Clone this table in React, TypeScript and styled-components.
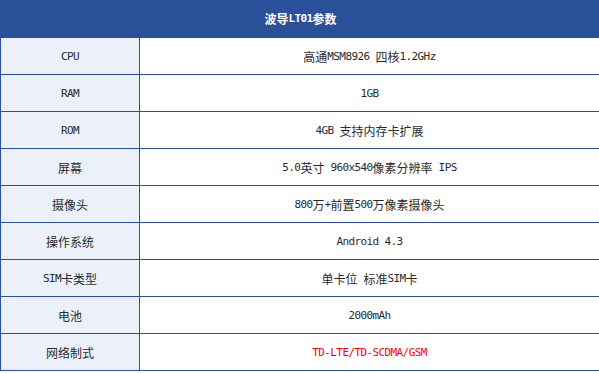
import { Fragment } from 'react';
import styled, { createGlobalStyle } from 'styled-components';

const GlobalStyle = createGlobalStyle`
    html, body {
        margin: 0;
        padding: 0;
        background: #fff;
        overflow: hidden;
    }
`

const specs: { label: string; value: string; highlight?: boolean }[] = [
    { label: 'CPU', value: '高通MSM8926 四核1.2GHz' },
    { label: 'RAM', value: '1GB' },
    { label: 'ROM', value: '4GB 支持内存卡扩展' },
    { label: '屏幕', value: '5.0英寸 960x540像素分辨率 IPS' },
    { label: '摄像头', value: '800万+前置500万像素摄像头' },
    { label: '操作系统', value: 'Android 4.3' },
    { label: 'SIM卡类型', value: '单卡位 标准SIM卡' },
    { label: '电池', value: '2000mAh' },
    { label: '网络制式', value: 'TD-LTE/TD-SCDMA/GSM', highlight: true },
];

// latin runs are drawn narrower, like the half-width glyphs of the original
const MixedText: React.FC<{ text: string }> = ({ text }) => (
    <>
        {text.split(/([\x20-\x7e]+)/).filter(Boolean).map((part, i) => (
            /[\x20-\x7e]/.test(part)
                ? <Latin key={i}>{part}</Latin>
                : <Fragment key={i}>{part}</Fragment>
        ))}
    </>
)

const SpecTable: React.FC = () => {
    return (
        <Sheet>
            <Title>
                <MixedText text="波导LT01参数" />
            </Title>
            {
                specs.map((spec) => (
                    <SpecRow key={spec.label}>
                        <LabelCell>
                            <MixedText text={spec.label} />
                        </LabelCell>
                        <ValueCell $highlight={spec.highlight}>
                            <MixedText text={spec.value} />
                        </ValueCell>
                    </SpecRow>
                ))
            }
        </Sheet>
    )
}

const Sheet = styled.div`
    width: 601px;
    display: flex;
    flex-direction: column;
    font-family: "Noto Sans CJK SC", "DejaVu Sans Mono", monospace;
    font-size: 12px;
    color: #2a2a2a;
`

const Title = styled.div`
    height: 38px;
    display: flex;
    align-items: center;
    justify-content: center;
    padding-bottom: 1px;
    box-sizing: border-box;
    background: #2b509a;
    color: #fff;
    font-weight: bold;
`

const SpecRow = styled.div`
    display: grid;
    grid-template-columns: 139px 1fr;
    height: 37px;
    box-sizing: border-box;
    border-left: 1px solid #2b509a;
    border-bottom: 1px solid #2b509a;
`

const LabelCell = styled.div`
    display: flex;
    align-items: center;
    justify-content: center;
    background: #ecf1f9;
    border-right: 1px solid #2b509a;
`

const ValueCell = styled.div<{ $highlight?: boolean }>`
    display: flex;
    align-items: center;
    justify-content: center;
    padding-right: 2px;
    color: ${(p) => (p.$highlight ? '#ff0000' : '#2a2a2a')};
`

const Latin = styled.span`
    font-family: "DejaVu Sans Mono", monospace;
    font-size: 11px;
    letter-spacing: -0.6px;
    white-space: pre;
`

export default function App() {
    return (
        <>
            <GlobalStyle />
            <SpecTable />
        </>
    )
}
